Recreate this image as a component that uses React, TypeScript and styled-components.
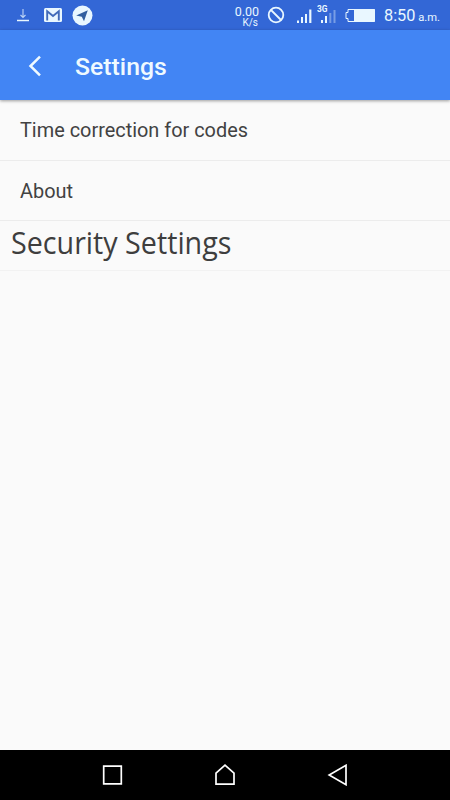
import React from 'react';
import styled, { createGlobalStyle } from 'styled-components';

const GlobalStyle = createGlobalStyle`
  *, *::before, *::after { box-sizing: border-box; }
  body { margin: 0; background: #fafafa; }
`;

const Screen = styled.div`
  display: flex;
  flex-direction: column;
  width: 450px;
  height: 800px;
  overflow: hidden;
  background: #fafafa;
  color: #424242;
  font-family: Roboto, sans-serif;
`;

const StatusBar = styled.header`
  display: flex;
  flex: none;
  align-items: center;
  height: 30px;
  padding: 0 10px 0 16px;
  background: #3367d6;
  color: #e9f7ff;
`;

const Icon = styled.svg<{ $gap?: number }>`
  display: block;
  flex: none;
  margin-left: ${({ $gap = 0 }) => $gap}px;
`;

const NetworkSpeed = styled.div`
  display: flex;
  flex-direction: column;
  align-items: flex-end;
  margin-left: auto;
  padding-top: 2px;
`;

const SpeedValue = styled.span`
  font-size: 12.5px;
  line-height: 13px;
`;

const SpeedUnit = styled.span`
  font-size: 10px;
  line-height: 10px;
  padding-right: 1px;
`;

const SignalLabel = styled.text`
  font: 700 9.5px Roboto, sans-serif;
`;

const Clock = styled.div`
  display: flex;
  align-items: baseline;
  justify-content: space-between;
  width: 56px;
  margin-left: 8px;
  font-size: 16.3px;
  line-height: 30px;
  white-space: nowrap;
  padding-top: 3px;
`;

const Meridiem = styled.span`
  font-size: 11.2px;
`;

const AppBar = styled.div`
  display: flex;
  flex: none;
  align-items: center;
  height: 70px;
  padding: 2px 0 0 28px;
  background: #4285f4;
  color: #effaff;
  box-shadow: 0 1px 3px rgba(0, 0, 0, 0.38);
`;

const BackButton = styled.button`
  width: 47px;
  padding: 0;
  border: 0;
  background: none;
  color: inherit;
`;

const Title = styled.h1`
  margin: 0;
  padding-top: 1px;
  font-size: 24.8px;
  font-weight: 500;
  line-height: 32px;
`;

const List = styled.main`
  flex: 1;
`;

const Row = styled.div`
  display: flex;
  align-items: center;
  height: 60.5px;
  padding: 2px 20px 0;
  border-bottom: 1px solid #ececec;
  font-size: 19.9px;
`;

const SectionRow = styled.div`
  height: 50px;
  padding-left: 11px;
  border-bottom: 1px solid #f2f2f2;
`;

const SectionTitle = styled.h2`
  display: inline-block;
  margin: 0;
  color: #3e3e3e;
  font: 400 30.5px/42px 'Open Sans', sans-serif;
  white-space: nowrap;
  transform: scaleX(0.94);
  transform-origin: left center;
`;

const NavBar = styled.nav`
  display: flex;
  flex: none;
  align-items: center;
  justify-content: space-between;
  height: 50px;
  padding: 0 101px;
  background: #000;
`;

const DownloadIcon = () => (
  <Icon width="14" height="18" viewBox="0 0 14 18" fill="none" stroke="currentColor">
    <path d="M7 3v8M4.5 9 7 11.5 9.5 9" strokeWidth="1.1" opacity=".75" />
    <path d="M1 14.5h12" strokeWidth="1.5" />
  </Icon>
);

const MailIcon = () => (
  <Icon $gap={14} width="18" height="16" viewBox="0 0 18 16">
    <rect y="1" width="18" height="14" rx="1.5" fill="currentColor" />
    <path d="M3.2 13.5V4.3L9 9l5.8-4.7v9.2" fill="none" stroke="#416bb9" strokeWidth="1.9" />
  </Icon>
);

const TelegramIcon = () => (
  <Icon $gap={10} width="21" height="21" viewBox="0 0 21 21">
    <circle cx="10.5" cy="10.5" r="10" fill="currentColor" />
    <path d="M4.2 10.5 15.8 5.3 12 16.2 9.8 11.7Z" fill="#315f9f" />
  </Icon>
);

const BlockedIcon = () => (
  <Icon $gap={8} width="18" height="18" viewBox="0 0 18 18" fill="none" stroke="currentColor" strokeWidth="1.8">
    <circle cx="9" cy="9" r="7.3" />
    <path d="m4 4 10 10" />
  </Icon>
);

const SignalIcon = () => (
  <Icon $gap={11} width="17" height="22" viewBox="0 0 17 22" fill="currentColor">
    <path d="M1 16.5h2V19H1zM5 13h2v6H5zM9 10h2v9H9zM13.2 5.5h2.2V19h-2.2z" />
  </Icon>
);

const MobileSignalIcon = () => (
  <Icon $gap={4} width="22" height="24" viewBox="0 0 22 24" fill="currentColor">
    <SignalLabel x="0" y="9" textLength="10.5" lengthAdjust="spacingAndGlyphs">3G</SignalLabel>
    <path d="M4 17h2v3H4zM8 13h2v7H8z" />
    <path d="M12.3 10h2v10h-2zM16.5 7h2v13h-2z" opacity=".38" />
  </Icon>
);

const BatteryIcon = () => (
  <Icon $gap={6} width="31" height="15" viewBox="0 0 31 15">
    <path d="M3 1.5h26.5v12H3v-3H1v-6h2Z" fill="none" stroke="currentColor" strokeWidth="1" />
    <path d="M9 1.5h21v12H9z" fill="currentColor" />
  </Icon>
);

export default function App() {
  return (
    <>
      <GlobalStyle />
      <Screen>
        <StatusBar>
          <DownloadIcon />
          <MailIcon />
          <TelegramIcon />
          <NetworkSpeed>
            <SpeedValue>0.00</SpeedValue>
            <SpeedUnit>K/s</SpeedUnit>
          </NetworkSpeed>
          <BlockedIcon />
          <SignalIcon />
          <MobileSignalIcon />
          <BatteryIcon />
          <Clock>
            <span>8:50</span>
            <Meridiem>a.m.</Meridiem>
          </Clock>
        </StatusBar>
        <AppBar>
          <BackButton aria-label="Back">
            <Icon width="14" height="22" viewBox="0 0 14 22" fill="none" stroke="currentColor" strokeWidth="2.5">
              <path d="M12 1.7 2.5 11 12 20.3" />
            </Icon>
          </BackButton>
          <Title>Settings</Title>
        </AppBar>
        <List>
          <Row>Time correction for codes</Row>
          <Row>About</Row>
          <SectionRow>
            <SectionTitle>Security Settings</SectionTitle>
          </SectionRow>
        </List>
        <NavBar>
          <Icon width="22" height="22" viewBox="0 0 22 22" fill="none" stroke="#fff" strokeWidth="1.7">
            <path d="M2.7 2.2h17.6v17.6H2.7z" />
          </Icon>
          <Icon width="22" height="22" viewBox="0 0 22 22" fill="none" stroke="#fff" strokeWidth="1.7">
            <path d="M2 20.2V9.2L11 1.2l9 8v11Z" />
          </Icon>
          <Icon width="22" height="22" viewBox="0 0 22 22" fill="none" stroke="#fff" strokeWidth="1.7">
            <path d="M19 1.3v19.4L2.2 11Z" />
          </Icon>
        </NavBar>
      </Screen>
    </>
  );
}
